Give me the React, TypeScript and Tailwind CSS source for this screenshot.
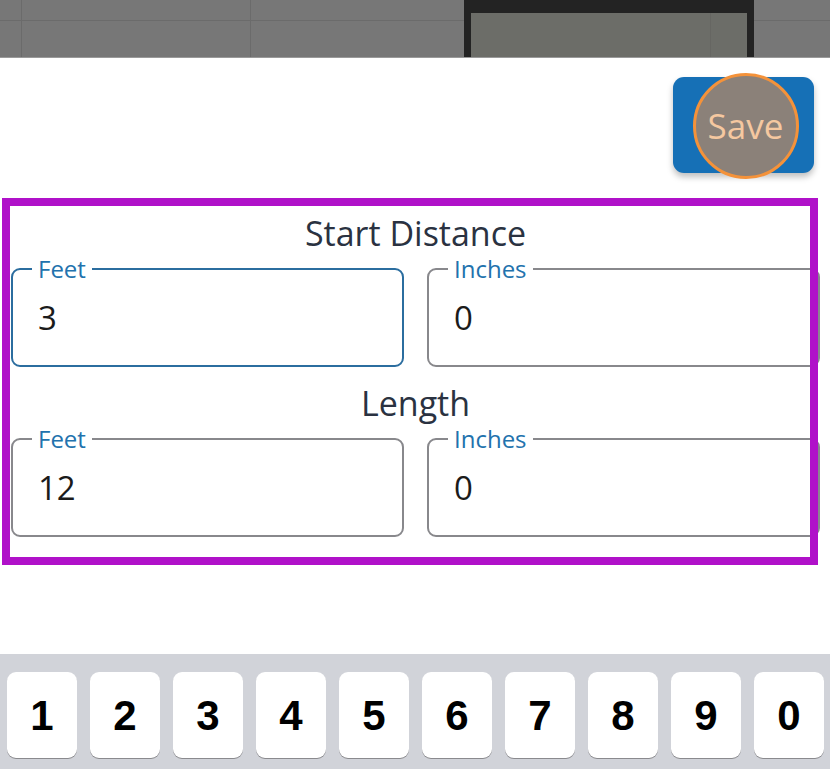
import type { ReactNode } from 'react';

const keys = ['1', '2', '3', '4', '5', '6', '7', '8', '9', '0'];

// thin horizontal rule of the blurred page behind the sheet
const rule =
  'bg-[linear-gradient(to_bottom,transparent_20px,#6b6b6b_20px,#6b6b6b_21px,transparent_21px)]';

function Field({ label, value, focused }: { label: string; value: string; focused?: boolean }) {
  return (
    <div
      className={`relative h-[99px] flex-1 rounded-[9px] border-2 bg-white ${
        focused ? 'border-[#2b6d9f]' : 'border-[#88888c]'
      }`}
    >
      <span className="absolute left-[19px] top-[-11px] bg-white px-[6px] text-[24px] leading-[20px] text-[#2272ad]">
        {label}
      </span>
      <div className="pl-[25px] pt-[28px] text-[33px] leading-[40px] text-[#1b1b1b]">{value}</div>
    </div>
  );
}

function Section({ title, children }: { title: string; children: ReactNode }) {
  return (
    <div>
      <h2 className="h-[34px] text-center text-[34px] leading-[34px] text-[#2a3241]">{title}</h2>
      <div className="mt-[18px] flex gap-[23px]">{children}</div>
    </div>
  );
}

export default function App() {
  return (
    <div className="relative flex h-[769px] w-[830px] flex-col overflow-hidden bg-white font-['Open_Sans',sans-serif]">
      {/* Backdrop behind the sheet */}
      <div className="flex h-[58px] shrink-0 border-b border-[#9a9a9a] bg-[#777777]">
        <div className={`w-[22px] border-r border-[#6b6b6b] ${rule}`} />
        <div className={`w-[229px] border-r border-[#6b6b6b] ${rule}`} />
        <div className={`w-[213px] ${rule}`} />
        <div className="flex w-[290px] border-x-[7px] border-t-[13px] border-[#232323] bg-[#6c6d68]">
          <div className="w-[240px] border-r border-[#666662]" />
        </div>
        <div className={`flex-1 ${rule}`} />
      </div>

      {/* Save button */}
      <div className="flex justify-end pr-[16px] pt-[19px]">
        <button className="flex h-[96px] w-[141px] items-center justify-center rounded-[11px] bg-[#1670b6] pl-[4px] shadow-[0_4px_6px_rgba(0,0,0,0.25)]">
          <span className="flex h-[106px] w-[106px] shrink-0 translate-y-[1px] items-center justify-center rounded-full border-[3px] border-[#f4923a] bg-[#8b8179] text-[35px] text-[#f5c8a0]">
            Save
          </span>
        </button>
      </div>

      {/* Form */}
      <div className="mt-[43px] flex flex-col gap-[19px] pl-[11px] pr-[10px]">
        <Section title="Start Distance">
          <Field label="Feet" value="3" focused />
          <Field label="Inches" value="0" />
        </Section>
        <Section title="Length">
          <Field label="Feet" value="12" />
          <Field label="Inches" value="0" />
        </Section>
      </div>

      {/* Highlight overlay */}
      <div className="pointer-events-none absolute left-[2px] top-[198px] h-[367px] w-[816px] border-[8px] border-[#b011c9]" />

      {/* Number pad */}
      <div className="mt-auto flex h-[115px] gap-[13px] bg-[#d1d3d9] pl-[7px] pt-[18px]">
        {keys.map((k) => (
          <div
            key={k}
            className="flex h-[86px] w-[70px] shrink-0 items-center justify-center rounded-[9px] bg-white font-['Liberation_Sans',sans-serif] text-[42px] font-bold text-black shadow-[0_1px_0_#8a8a8e]"
          >
            {k}
          </div>
        ))}
      </div>
    </div>
  );
}
